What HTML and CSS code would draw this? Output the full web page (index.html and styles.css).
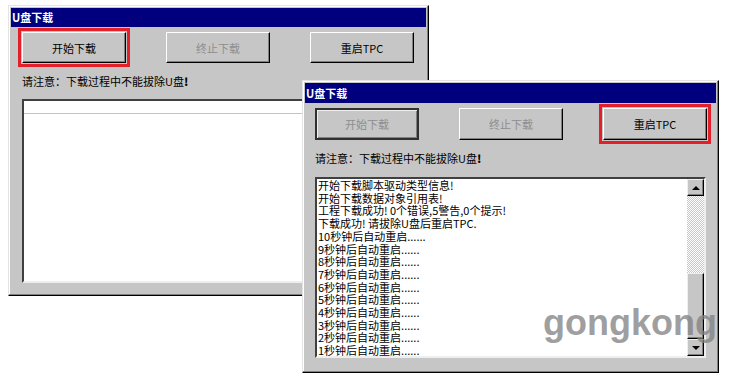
FILE: index.html
```html
<!DOCTYPE html>
<html lang="zh-CN">
<head>
    <meta charset="UTF-8">
    <title>U盘下载</title>
    <link rel="stylesheet" href="styles.css">
</head>
<body>
    <div class="desk">
        <!-- fenêtre arrière : avant le téléchargement -->
        <div class="dlg dlg-back">
            <div class="titlebar">U盘下载</div>
            <div class="dlg-body">
                <div class="btn-row">
                    <div class="btn mark">开始下载</div>
                    <div class="btn disabled">终止下载</div>
                    <div class="btn">重启TPC</div>
                </div>
                <div class="note">请注意：下载过程中不能拔除U盘<b>!</b></div>
                <div class="listbox listbox-back">
                    <div class="sel-line"></div>
                </div>
            </div>
        </div>

        <!-- fenêtre avant : téléchargement terminé -->
        <div class="dlg dlg-front">
            <div class="titlebar">U盘下载</div>
            <div class="dlg-body">
                <div class="btn-row">
                    <div class="btn disabled framed">开始下载</div>
                    <div class="btn disabled">终止下载</div>
                    <div class="btn mark">重启TPC</div>
                </div>
                <div class="note">请注意：下载过程中不能拔除U盘<b>!</b></div>
                <div class="listbox listbox-front">
                    <div class="lines">
                        <div>开始下载脚本驱动类型信息!</div>
                        <div>开始下载数据对象引用表!</div>
                        <div>工程下载成功! 0个错误,5警告,0个提示!</div>
                        <div>下载成功! 请拔除U盘后重启TPC.</div>
                        <div>10秒钟后自动重启......</div>
                        <div>9秒钟后自动重启......</div>
                        <div>8秒钟后自动重启......</div>
                        <div>7秒钟后自动重启......</div>
                        <div>6秒钟后自动重启......</div>
                        <div>5秒钟后自动重启......</div>
                        <div>4秒钟后自动重启......</div>
                        <div>3秒钟后自动重启......</div>
                        <div>2秒钟后自动重启......</div>
                        <div>1秒钟后自动重启......</div>
                    </div>
                    <div class="scrollbar">
                        <div class="sb-btn"><span class="arrow-up"></span></div>
                        <div class="sb-track"></div>
                        <div class="sb-thumb"></div>
                        <div class="sb-btn"><span class="arrow-down"></span></div>
                    </div>
                </div>
            </div>
        </div>

        <div class="watermark">gongkong</div>
    </div>
</body>
</html>
```

FILE: styles.css
```css
body {
    margin: 0;
    background-color: #fff;
    font-family: "Noto Sans CJK SC", "DejaVu Sans", sans-serif;
    font-size: 11px;
    color: #000;
}
.desk {
    position: relative;
    width: 730px;
    height: 376px;
    overflow: hidden;
}
.dlg {
    position: absolute;
    box-sizing: border-box;
    background-color: #c6c6c6;
    border: 1px solid;
    border-color: #e4e4e4 #000 #000 #e4e4e4;
    box-shadow: inset -1px -1px #808080, inset 1px 1px #fff;
    padding: 2px;
    display: flex;
    flex-direction: column;
}
.dlg-back {
    left: 8px;
    top: 5px;
    width: 421px;
    height: 291px;
}
.dlg-front {
    left: 302px;
    top: 80px;
    width: 417px;
    height: 293px;
}
.titlebar {
    background-color: #00007e;
    color: #fff;
    font-weight: bold;
    font-size: 11px;
    height: 19px;
    line-height: 19px;
    padding-left: 1px;
}
.dlg-front .titlebar {
    height: 20px;
    line-height: 20px;
}
.dlg-body {
    flex: 1;
    display: flex;
    flex-direction: column;
    padding: 5px 0 0 11px;
}
.dlg-front .dlg-body {
    padding-left: 10px;
}
.btn-row {
    display: flex;
    gap: 40px;
}
.btn {
    box-sizing: border-box;
    width: 104px;
    height: 31px;
    display: flex;
    align-items: center;
    justify-content: center;
    border: 1px solid;
    border-color: #fff #000 #000 #fff;
    box-shadow: inset -1px -1px #808080;
}
.dlg-front .btn {
    height: 32px;
}
.btn.disabled {
    color: #8e8e8e;
}
.btn.framed {
    border: 2px solid #303030;
    box-shadow: inset 1px 1px #eee, inset -1px -1px #808080;
}
.mark {
    outline: 3px solid #e3202a;
    outline-offset: 1px;
}
.note {
    margin-top: 10px;
    height: 17px;
    line-height: 17px;
}
.note b {
    font-weight: 900;
}
.listbox {
    box-sizing: border-box;
    background-color: #fff;
    border: 2px solid;
    border-color: #404040 #eee #eee #404040;
}
.listbox-back {
    margin-top: 9px;
    width: 404px;
    height: 184px;
}
.sel-line {
    margin-top: 12px;
    border-top: 1px solid #c4c4c4;
}
.listbox-front {
    margin-top: 10px;
    width: 391px;
    height: 181px;
    display: flex;
}
.lines {
    flex: 1;
    padding-left: 1px;
    line-height: 12.7px;
    white-space: nowrap;
}
.scrollbar {
    width: 17px;
    display: flex;
    flex-direction: column;
}
.sb-btn, .sb-thumb {
    box-sizing: border-box;
    background-color: #c6c6c6;
    border: 1px solid;
    border-color: #eee #000 #000 #eee;
    box-shadow: inset -1px -1px #808080;
}
.sb-btn {
    height: 17px;
    display: flex;
    align-items: center;
    justify-content: center;
}
.sb-thumb {
    height: 66px;
}
.sb-track {
    flex: 1;
    background: repeating-conic-gradient(#fff 0 25%, #c6c6c6 0 50%) 0 0 / 2px 2px;
}
.arrow-up, .arrow-down {
    width: 0;
    height: 0;
    border-left: 4px solid transparent;
    border-right: 4px solid transparent;
}
.arrow-up {
    border-bottom: 4px solid #000;
}
.arrow-down {
    border-top: 4px solid #000;
}
.watermark {
    position: absolute;
    left: 543px;
    top: 302px;
    font-family: "Liberation Sans", Arial, sans-serif;
    font-weight: bold;
    font-size: 36px;
    color: rgba(128, 128, 128, 0.75);
}
```
